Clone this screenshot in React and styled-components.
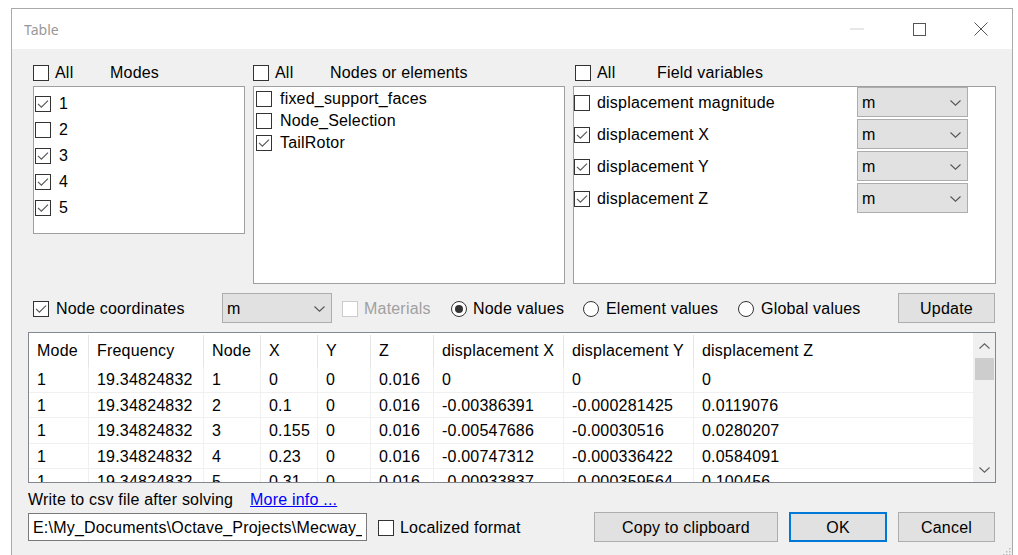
import React from 'react';
import styled, { createGlobalStyle, css } from 'styled-components';

const GlobalStyle = createGlobalStyle`
  html, body {
    margin: 0;
    padding: 0;
    background: #fff;
    overflow: hidden;
  }
  body {
    font-family: "Liberation Sans", Arial, sans-serif;
    font-size: 16px;
    color: #000;
  }
  * {
    box-sizing: border-box;
  }
`;

const Window = styled.div`
  margin: 8px 0 0 11px;
  width: 1002px;
  height: 549px;
  border: 1px solid #aaa;
  border-bottom: none;
  display: flex;
  flex-direction: column;
  letter-spacing: 0.2px;
`;

const TitleBar = styled.div`
  height: 40px;
  flex: none;
  background: #fff;
  display: flex;
  align-items: center;
`;

const Caption = styled.div`
  flex: 1;
  padding-left: 12px;
  font-family: "Noto Sans", "Open Sans", sans-serif;
  font-size: 14px;
  letter-spacing: 0;
  color: #999;
`;

const CaptionButton = styled.div`
  width: 62px;
  height: 40px;
  display: flex;
  align-items: center;
  justify-content: center;
`;

const Body = styled.div`
  flex: 1;
  position: relative;
  background: #f0f0f0;
  padding: 13px 16px 0;
`;

const Grip = styled.svg`
  position: absolute;
  right: 1px;
  bottom: 1px;
`;

/* ---------- check boxes and radios ---------- */

const Box = styled.span`
  width: 16px;
  height: 16px;
  flex: none;
  display: inline-flex;
  align-items: center;
  justify-content: center;
  background: #fff;
  border: 1px solid ${(p) => (p.$disabled ? '#cccccc' : '#333')};
`;

const Check = ({ checked, disabled }) => (
  <Box $disabled={disabled}>
    {checked && (
      <svg width="12" height="10" viewBox="0 0 12 10">
        <path d="M1 4.8 L4.4 8.2 L11 1.6" fill="none" stroke="#5a5a5a" strokeWidth="1.2" />
      </svg>
    )}
  </Box>
);

const Radio = styled.span`
  width: 16px;
  height: 16px;
  flex: none;
  border-radius: 50%;
  border: 1px solid #333;
  background: #fff;
  display: inline-flex;
  align-items: center;
  justify-content: center;

  &::after {
    content: '';
    width: 8px;
    height: 8px;
    border-radius: 50%;
    background: ${(p) => (p.$on ? '#333' : 'transparent')};
  }
`;

const Chevron = ({ up, color = '#555' }) => (
  <svg width="11" height="6" viewBox="0 0 11 6">
    <path
      d={up ? 'M0.5 5.5 L5.5 0.8 L10.5 5.5' : 'M0.5 0.5 L5.5 5.2 L10.5 0.5'}
      fill="none"
      stroke={color}
      strokeWidth="1.1"
    />
  </svg>
);

/* ---------- top lists ---------- */

const TopRow = styled.div`
  display: flex;
  gap: 8px;
  margin-left: 5px;
  align-items: flex-start;
`;

const Group = styled.div`
  width: ${(p) => p.$w}px;
  flex: none;
`;

const GroupHead = styled.div`
  height: 20px;
  display: flex;
  align-items: center;
  padding-top: 2px;
  padding-left: ${(p) => p.$pad || 0}px;
`;

const AllLabel = styled.span`
  margin-left: 6px;
  width: ${(p) => p.$w}px;
  flex: none;
`;

const ListBox = styled.div`
  margin-top: 4px;
  height: ${(p) => p.$h}px;
  background: #fff;
  border: 1px solid #a0a0a0;
  padding: ${(p) => p.$pad};
  display: flex;
  flex-direction: column;
`;

const ListItem = styled.div`
  height: ${(p) => p.$h}px;
  flex: none;
  display: flex;
  align-items: center;
  gap: ${(p) => p.$gap ?? 8}px;
  padding-top: 2px;
  white-space: nowrap;
`;

const FieldRow = styled.div`
  display: grid;
  grid-template-columns: 283px 111px;
  height: 30px;
  margin-bottom: 2px;
  align-items: center;
`;

const Combo = styled.div`
  width: ${(p) => p.$w}px;
  height: 30px;
  flex: none;
  background: #e1e1e1;
  border: 1px solid #adadad;
  display: flex;
  align-items: center;
  justify-content: space-between;
  padding: 2px 6px 0 4px;
`;

/* ---------- options row ---------- */

const OptionsRow = styled.div`
  display: flex;
  align-items: center;
  height: 31px;
  margin-top: 8px;
`;

const Slot = styled.div`
  width: ${(p) => p.$w}px;
  flex: none;
  display: flex;
  align-items: center;
  gap: ${(p) => p.$gap ?? 6}px;
  padding-top: 2px;
  padding-left: ${(p) => p.$pad || 0}px;
  margin-left: ${(p) => p.$ml || 0}px;
  color: ${(p) => (p.$disabled ? '#a0a0a0' : 'inherit')};
  white-space: nowrap;
`;

const Button = styled.div`
  width: ${(p) => p.$w}px;
  height: 30px;
  flex: none;
  display: flex;
  align-items: center;
  justify-content: center;
  padding-top: 2px;
  background: #e1e1e1;
  border: 1px solid #adadad;
  ${(p) =>
    p.$primary &&
    css`
      border: 2px solid #0078d7;
    `}
`;

/* ---------- results table ---------- */

const TableFrame = styled.div`
  margin-top: 9px;
  height: 151px;
  background: #fff;
  border: 1px solid #828790;
  display: flex;
  overflow: hidden;
`;

const Grid = styled.div`
  flex: 1;
  display: grid;
  grid-template-columns: 60px 115px 57px 57px 53px 63px 130px 130px 1fr;
  grid-template-rows: 34px;
  grid-auto-rows: 25.5px;
  align-content: start;
  overflow: hidden;
`;

const HeadCell = styled.div`
  display: flex;
  align-items: center;
  padding-left: 8px;
  white-space: nowrap;
  overflow: hidden;
  border-right: ${(p) => (p.$last ? 'none' : '1px solid #e5e5e5')};
  margin-top: 2px;
`;

const Cell = styled.div`
  display: flex;
  align-items: center;
  padding: 2px 0 0 8px;
  white-space: nowrap;
  overflow: hidden;
  border-bottom: 1px solid #f0f0f0;
  border-right: ${(p) => (p.$last ? 'none' : '1px solid #f0f0f0')};
`;

const ScrollBar = styled.div`
  width: 22px;
  flex: none;
  background: #f0f0f0;
  display: flex;
  flex-direction: column;
  align-items: center;
`;

const ScrollArrow = styled.div`
  height: 25px;
  width: 100%;
  flex: none;
  display: flex;
  align-items: center;
  justify-content: center;
`;

const Thumb = styled.div`
  width: 19px;
  height: 22px;
  flex: none;
  background: #cdcdcd;
`;

const Track = styled.div`
  flex: 1;
`;

/* ---------- footer ---------- */

const CsvLine = styled.div`
  margin-top: 7px;
  height: 18px;
  display: flex;
  align-items: center;
  padding-top: 2px;
`;

const MoreLink = styled.a`
  margin-left: 17px;
  color: #0000ff;
  text-decoration: underline;
`;

const BottomRow = styled.div`
  margin-top: 4px;
  height: 30px;
  display: flex;
  align-items: center;
`;

const PathInput = styled.input`
  width: 339px;
  height: 28px;
  border: 1px solid #7a7a7a;
  background: #fff;
  padding: 2px 4px 0;
  font: inherit;
  letter-spacing: inherit;
  color: #000;
  outline: none;
`;

const ButtonGroup = styled.div`
  margin-left: auto;
  padding-right: 1px;
  display: flex;
  gap: 11px;
`;

const modes = [
  ['1', true],
  ['2', false],
  ['3', true],
  ['4', true],
  ['5', true],
];

const sets = [
  ['fixed_support_faces', false],
  ['Node_Selection', false],
  ['TailRotor', true],
];

const fields = [
  ['displacement magnitude', false],
  ['displacement X', true],
  ['displacement Y', true],
  ['displacement Z', true],
];

const columns = ['Mode', 'Frequency', 'Node', 'X', 'Y', 'Z', 'displacement X', 'displacement Y', 'displacement Z'];

const rows = [
  ['1', '19.34824832', '1', '0', '0', '0.016', '0', '0', '0'],
  ['1', '19.34824832', '2', '0.1', '0', '0.016', '-0.00386391', '-0.000281425', '0.0119076'],
  ['1', '19.34824832', '3', '0.155', '0', '0.016', '-0.00547686', '-0.00030516', '0.0280207'],
  ['1', '19.34824832', '4', '0.23', '0', '0.016', '-0.00747312', '-0.000336422', '0.0584091'],
  ['1', '19.34824832', '5', '0.31', '0', '0.016', '-0.00933837', '-0.000359564', '0.100456'],
];

export default function App() {
  return (
    <>
      <GlobalStyle />
      <Window>
        <TitleBar>
          <Caption>Table</Caption>
          <CaptionButton>
            <svg width="14" height="2" viewBox="0 0 14 2">
              <line x1="0" y1="1" x2="14" y2="1" stroke="#cfcfcf" strokeWidth="1" />
            </svg>
          </CaptionButton>
          <CaptionButton>
            <svg width="13" height="13" viewBox="0 0 13 13">
              <rect x="0.5" y="0.5" width="12" height="12" fill="none" stroke="#555" strokeWidth="1" />
            </svg>
          </CaptionButton>
          <CaptionButton>
            <svg width="14" height="14" viewBox="0 0 14 14">
              <path d="M0.5 0.5 L13.5 13.5 M13.5 0.5 L0.5 13.5" stroke="#555" strokeWidth="1" />
            </svg>
          </CaptionButton>
        </TitleBar>

        <Body>
          <TopRow>
            <Group $w={212}>
              <GroupHead>
                <Check />
                <AllLabel $w={55}>All</AllLabel>
                <span>Modes</span>
              </GroupHead>
              <ListBox $h={148} $pad="3px 0 0 1px">
                {modes.map(([label, on]) => (
                  <ListItem key={label} $h={26}>
                    <Check checked={on} />
                    {label}
                  </ListItem>
                ))}
              </ListBox>
            </Group>

            <Group $w={312}>
              <GroupHead>
                <Check />
                <AllLabel $w={55}>All</AllLabel>
                <span>Nodes or elements</span>
              </GroupHead>
              <ListBox $h={198} $pad="0 0 0 2px">
                {sets.map(([label, on]) => (
                  <ListItem key={label} $h={22}>
                    <Check checked={on} />
                    {label}
                  </ListItem>
                ))}
              </ListBox>
            </Group>

            <Group $w={423}>
              <GroupHead $pad={2}>
                <Check />
                <AllLabel $w={60}>All</AllLabel>
                <span>Field variables</span>
              </GroupHead>
              <ListBox $h={198} $pad="0">
                {fields.map(([label, on]) => (
                  <FieldRow key={label}>
                    <ListItem $h={30} $gap={7}>
                      <Check checked={on} />
                      {label}
                    </ListItem>
                    <Combo $w={111}>
                      <span>m</span>
                      <Chevron />
                    </Combo>
                  </FieldRow>
                ))}
              </ListBox>
            </Group>
          </TopRow>

          <OptionsRow>
            <Slot $w={194} $pad={5} $gap={7}>
              <Check checked />
              Node coordinates
            </Slot>
            <Combo $w={110}>
              <span>m</span>
              <Chevron />
            </Combo>
            <Slot $w={109} $ml={10} $disabled>
              <Check disabled />
              Materials
            </Slot>
            <Slot $w={132}>
              <Radio $on />
              Node values
            </Slot>
            <Slot $w={155} $gap={7}>
              <Radio />
              Element values
            </Slot>
            <Slot $w={160} $gap={7}>
              <Radio />
              Global values
            </Slot>
            <Button $w={97}>Update</Button>
          </OptionsRow>

          <TableFrame>
            <Grid>
              {columns.map((c, i) => (
                <HeadCell key={c} $last={i === columns.length - 1}>
                  {c}
                </HeadCell>
              ))}
              {rows.map((r, ri) =>
                r.map((v, ci) => (
                  <Cell key={`${ri}-${ci}`} $last={ci === r.length - 1}>
                    {v}
                  </Cell>
                ))
              )}
            </Grid>
            <ScrollBar>
              <ScrollArrow>
                <Chevron up color="#606060" />
              </ScrollArrow>
              <Thumb />
              <Track />
              <ScrollArrow>
                <Chevron color="#606060" />
              </ScrollArrow>
            </ScrollBar>
          </TableFrame>

          <CsvLine>
            Write to csv file after solving
            <MoreLink href="#">More info ...</MoreLink>
          </CsvLine>

          <BottomRow>
            <PathInput readOnly value="E:\My_Documents\Octave_Projects\Mecway_Projects\modes.csv" />
            <Slot $w={160} $ml={11}>
              <Check />
              Localized format
            </Slot>
            <ButtonGroup>
              <Button $w={184}>Copy to clipboard</Button>
              <Button $w={98} $primary>
                OK
              </Button>
              <Button $w={97}>Cancel</Button>
            </ButtonGroup>
          </BottomRow>

          <Grip width="10" height="10" viewBox="0 0 10 10">
            {[
              [8, 2],
              [5, 5],
              [8, 5],
              [2, 8],
              [5, 8],
              [8, 8],
            ].map(([x, y]) => (
              <rect key={`${x}${y}`} x={x} y={y} width="1.5" height="1.5" fill="#bbb" />
            ))}
          </Grip>
        </Body>
      </Window>
    </>
  );
}
